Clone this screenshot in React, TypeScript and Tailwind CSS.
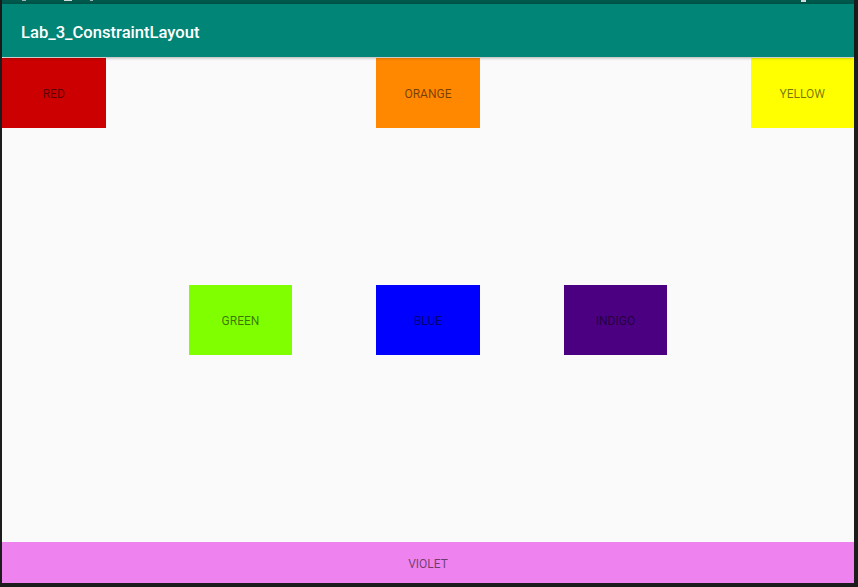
import React from "react";

export default function App() {
  const topRow = [
    { label: "RED", bg: "bg-[#cc0000]" },
    { label: "ORANGE", bg: "bg-[#ff8800]" },
    { label: "YELLOW", bg: "bg-[#ffff00]" },
  ];
  const midRow = [
    { label: "GREEN", bg: "bg-[#80ff00]" },
    { label: "BLUE", bg: "bg-[#0000ff]" },
    { label: "INDIGO", bg: "bg-[#4b0082]" },
  ];

  return (
    <div className="w-[858px] h-[587px] bg-[#1c1c1c] flex flex-col pl-[2px] pr-[4px] pb-[4px] font-['Roboto',sans-serif]">
      {/* status bar */}
      <div className="h-[4px] bg-[#00574b] flex items-start">
        <span className="ml-[20px] mt-0 w-[4px] h-[1px] bg-[#9fb8b3]" />
        <span className="ml-[38px] w-[8px] h-[1px] bg-[#cfdcda]" />
        <span className="ml-[18px] w-[3px] h-[1px] bg-[#9fb8b3]" />
        <span className="ml-auto mr-[48px] w-[5px] h-[2px] bg-[#cfdcda]" />
      </div>

      {/* app bar */}
      <div className="relative z-10 h-[53px] bg-[#008577] flex items-center pl-[19px] pt-[5px] shadow-[0_1px_3px_rgba(0,0,0,0.3)]">
        <span className="text-white text-[16.6px] font-medium">Lab_3_ConstraintLayout</span>
      </div>

      {/* content */}
      <div className="flex-1 bg-[#fafafa] flex flex-col">
        <div className="mt-[1px] flex justify-between">
          {topRow.map((b) => (
            <div key={b.label} className={`w-[103.5px] h-[70px] ${b.bg} flex items-center justify-center pt-[2px] text-[12px] text-black/55`}>
              {b.label}
            </div>
          ))}
        </div>

        <div className="mt-[157px] flex justify-center gap-[84px]">
          {midRow.map((b) => (
            <div key={b.label} className={`w-[103.5px] h-[70px] ${b.bg} flex items-center justify-center pt-[2px] text-[12px] text-black/55`}>
              {b.label}
            </div>
          ))}
        </div>

        <div className="flex-1" />

        <div className="h-[41px] bg-[#ee82ee] flex items-center justify-center pt-[2px] text-[12px] text-black/55">
          VIOLET
        </div>
      </div>
    </div>
  );
}
